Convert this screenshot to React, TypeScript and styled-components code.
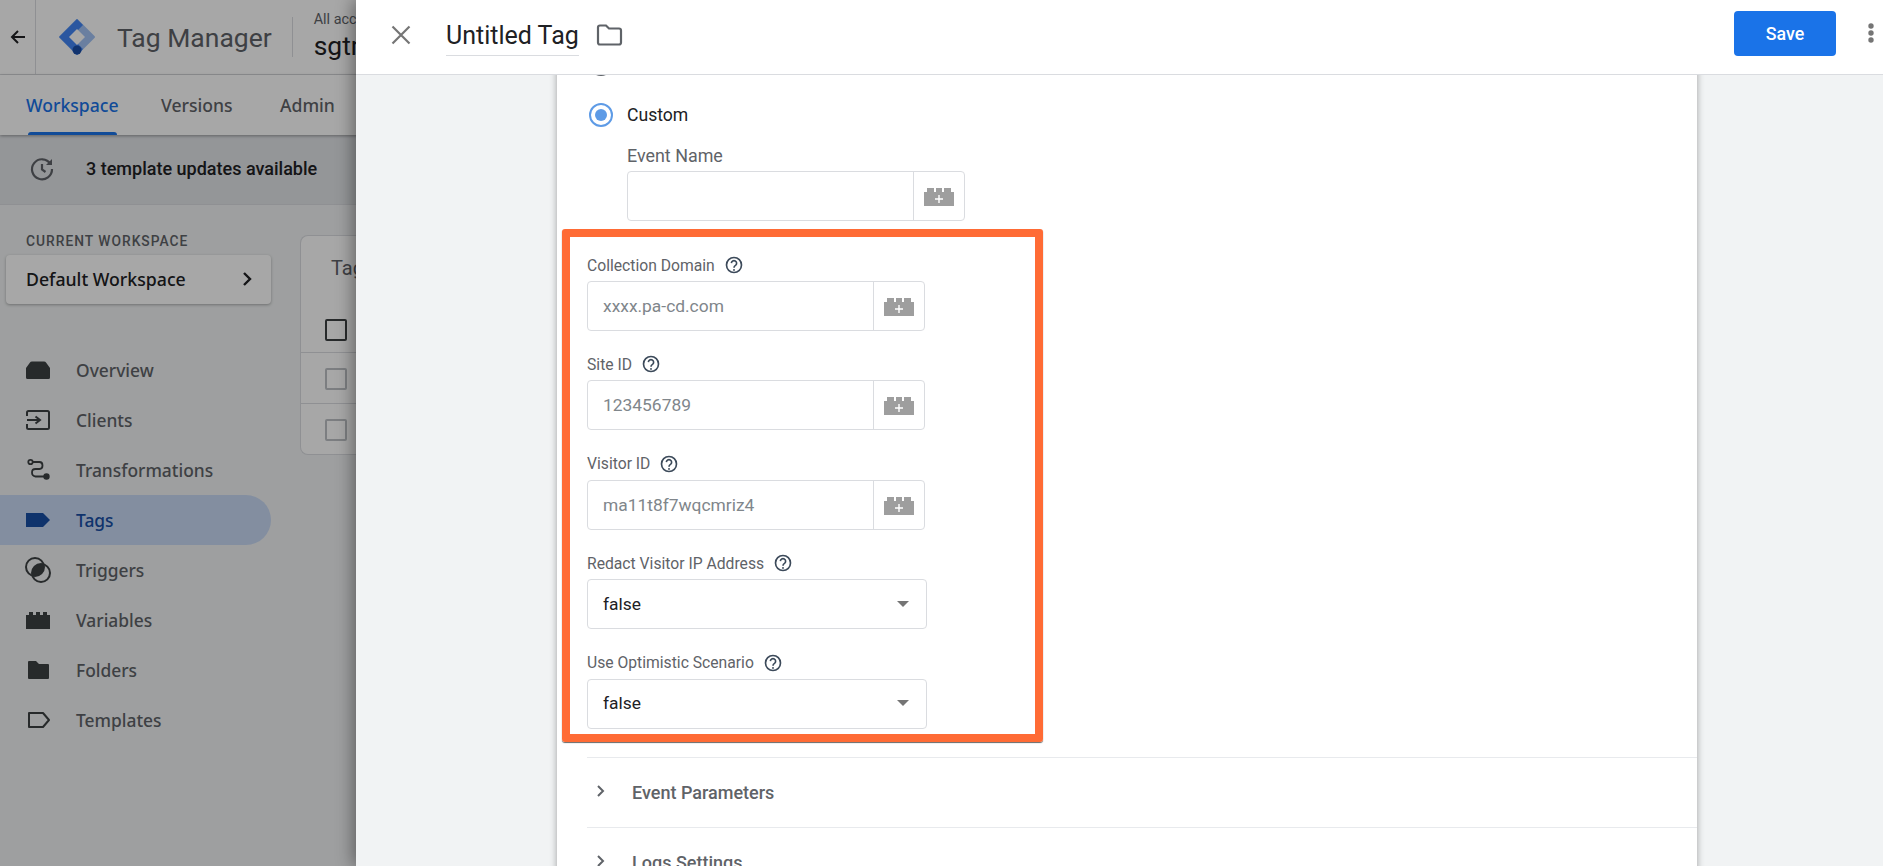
import React from "react";
import styled, { createGlobalStyle } from "styled-components";

const GlobalStyle = createGlobalStyle`
  html, body {
    margin: 0;
    padding: 0;
    height: 100%;
    overflow: hidden;
    font-family: Roboto, "Liberation Sans", sans-serif;
    font-size: 18px;
    color: #202124;
  }
  * { box-sizing: border-box; }
`;

const Page = styled.div`
  position: relative;
  width: 100vw;
  height: 100vh;
  overflow: hidden;
  background: #f1f3f4;
`;

/* ---------- page behind the drawer ---------- */

const TopBar = styled.header`
  display: flex;
  align-items: center;
  height: 75px;
  background: #fff;
  border-bottom: 1px solid #dadce0;
`;

const BackCell = styled.div`
  display: flex;
  align-items: center;
  justify-content: center;
  width: 36px;
  height: 74px;
  border-right: 1px solid #dadce0;
  color: #202124;
`;

const Logo = styled.svg`
  width: 38px;
  height: 38px;
  margin-left: 22px;
  flex: none;
`;

const ProductName = styled.div`
  margin-left: 21px;
  font-size: 26.5px;
  color: #5f6368;
  white-space: nowrap;
`;

const BarDivider = styled.div`
  width: 1px;
  height: 40px;
  margin-left: 20px;
  background: #dadce0;
`;

const AccountBlock = styled.div`
  margin-left: 21px;
  white-space: nowrap;
`;

const AccountPath = styled.div`
  font-size: 14.4px;
  line-height: 18px;
  color: #5f6368;
`;

const ContainerName = styled.div`
  font-size: 26.4px;
  line-height: 34px;
  color: #202124;
`;

const TabBar = styled.nav`
  display: flex;
  height: 60px;
  padding-left: 26px;
  background: #fff;
  box-shadow: 0 1px 3px rgba(0, 0, 0, 0.35);
  position: relative;
`;

const Tab = styled.div<{ $active?: boolean; $width: number }>`
  position: relative;
  width: ${(p) => p.$width}px;
  padding-top: 18px;
  font-family: "Noto Sans", Roboto, sans-serif;
  font-size: 17.6px;
  line-height: 24px;
  font-weight: 500;
  color: ${(p) => (p.$active ? "#1a73e8" : "#5f6368")};
  ${(p) =>
    p.$active &&
    `&::after {
      content: "";
      position: absolute;
      left: 2px;
      width: 89px;
      bottom: 0;
      height: 3px;
      border-radius: 3px 3px 0 0;
      background: #1a73e8;
    }`}
`;

const UpdateBanner = styled.div`
  display: flex;
  align-items: center;
  height: 70px;
  padding: 0 0 2px 29px;
  background: #e3e5e9;
  border-bottom: 1px solid #dadce0;
  font-weight: 500;
  font-size: 18px;
`;

const BannerText = styled.span`
  margin-left: 31px;
`;

const Content = styled.div`
  display: flex;
`;

const Sidebar = styled.aside`
  width: 300px;
  flex: none;
  padding-top: 28px;
`;

const SectionCaption = styled.div`
  padding-left: 26px;
  font-size: 13.8px;
  line-height: 16px;
  font-weight: 500;
  letter-spacing: 1px;
  color: #5f6368;
`;

const WorkspaceButton = styled.div`
  display: flex;
  align-items: center;
  justify-content: space-between;
  width: 265px;
  height: 49px;
  margin: 6px 0 41px 6px;
  padding: 0 18px 2px 20px;
  border-radius: 4px;
  background: #fff;
  box-shadow: 0 1px 3px rgba(0, 0, 0, 0.3);
  font-family: "Noto Sans", Roboto, sans-serif;
  font-size: 17.7px;
  font-weight: 500;
`;

const NavList = styled.div`
  display: flex;
  flex-direction: column;
`;

const NavRow = styled.div<{ $active?: boolean }>`
  display: flex;
  align-items: center;
  width: 271px;
  height: 50px;
  padding: 0 0 1px 26px;
  border-radius: 0 25px 25px 0;
  background: ${(p) => (p.$active ? "#c8d9f4" : "transparent")};
  color: ${(p) => (p.$active ? "#174ea6" : "#5f6368")};
  font-family: "Noto Sans", Roboto, sans-serif;
  font-size: 17.4px;
  font-weight: 500;
`;

const NavIcon = styled.svg`
  width: 26px;
  height: 26px;
  margin-left: -1px;
  margin-right: 25px;
  flex: none;
`;

const TagsCard = styled.section`
  flex: 1;
  height: 220px;
  margin-top: 30px;
  background: #fff;
  border: 1px solid #dadce0;
  border-right: 0;
  border-radius: 8px 0 0 8px;
`;

const TagsTitle = styled.div`
  height: 62px;
  padding: 20px 0 0 30px;
  font-size: 20px;
  line-height: 24px;
  color: #5f6368;
`;

const TagsRow = styled.div<{ $head?: boolean }>`
  display: flex;
  align-items: center;
  height: ${(p) => (p.$head ? "55px" : "51px")};
  padding-top: ${(p) => (p.$head ? "10px" : "1px")};
  padding-left: 24px;
  border-bottom: 1px solid #dadce0;
  &:last-child {
    border-bottom: 0;
  }
`;

const Checkbox = styled.div<{ $dark?: boolean }>`
  width: 22px;
  height: 22px;
  border-radius: 2px;
  border: 2px solid ${(p) => (p.$dark ? "#3c4043" : "#bdc1c6")};
`;

const Scrim = styled.div`
  position: absolute;
  inset: 0;
  background: rgba(0, 0, 0, 0.345);
`;

/* ---------- tag drawer ---------- */

const Drawer = styled.div`
  position: absolute;
  top: 0;
  bottom: 0;
  left: 356px;
  right: 0;
  display: flex;
  flex-direction: column;
  background: #f1f3f4;
  box-shadow: -3px 0 16px rgba(0, 0, 0, 0.4);
`;

const DrawerHeader = styled.header`
  position: relative;
  z-index: 2;
  display: flex;
  align-items: center;
  flex: none;
  height: 75px;
  padding: 0 0 4px 32px;
  background: #fff;
  border-bottom: 1px solid #dadce0;
`;

const TagTitle = styled.div`
  height: 46px;
  width: 133px;
  margin: -4px 0 0 32px;
  padding-top: 10px;
  font-size: 25px;
  line-height: 32px;
  white-space: nowrap;
  color: #202124;
  border-bottom: 1px solid #dadce0;
`;

const FolderIcon = styled.svg`
  width: 28px;
  height: 28px;
  margin-left: 16px;
`;

const SaveButton = styled.div`
  display: flex;
  align-items: center;
  justify-content: center;
  width: 102px;
  height: 45px;
  margin: -3px 0 0 auto;
  border-radius: 4px;
  background: #1a73e8;
  color: #fff;
  font-weight: 500;
  font-size: 17.8px;
`;

const MoreDots = styled.svg`
  width: 8px;
  height: 22px;
  margin: -4px 8px 0 31px;
`;

const DrawerBody = styled.div`
  flex: 1;
  overflow: hidden;
`;

const Card = styled.div`
  width: 1140px;
  margin-left: 201px;
  padding-left: 30px;
  background: #fff;
  box-shadow: 0 0 7px rgba(0, 0, 0, 0.35);
`;

const RadioRow = styled.div<{ $scrolledOff?: boolean }>`
  display: flex;
  align-items: center;
  gap: 14px;
  margin-left: 2px;
  margin-top: ${(p) => (p.$scrolledOff ? "-23px" : "27px")};
  height: 24px;
  font-size: 17.6px;
`;

const Radio = styled.span<{ $checked?: boolean }>`
  display: inline-flex;
  align-items: center;
  justify-content: center;
  width: 24px;
  height: 24px;
  border-radius: 50%;
  border: 2px solid ${(p) => (p.$checked ? "#5e9be6" : "#5f6368")};
  &::after {
    content: "";
    display: ${(p) => (p.$checked ? "block" : "none")};
    width: 12px;
    height: 12px;
    border-radius: 50%;
    background: #5e9be6;
  }
`;

const EventNameBlock = styled.div`
  margin: 19px 0 35px 40px;
`;

const EventLabel = styled.div`
  height: 20px;
  margin-bottom: 5px;
  font-size: 17.9px;
  line-height: 20px;
  color: #5f6368;
`;

const Fields = styled.div`
  position: relative;
  display: flex;
  flex-direction: column;
  gap: 24.4px;
`;

const Highlight = styled.div`
  position: absolute;
  left: -25px;
  top: -27px;
  width: 481px;
  height: 513px;
  border: 8px solid #ff6b35;
  border-radius: 3px;
  box-shadow: 0 1px 1px rgba(0, 0, 0, 0.6);
  pointer-events: none;
`;

const FieldLabel = styled.div`
  display: flex;
  align-items: center;
  height: 18px;
  margin-bottom: 7px;
  font-size: 15.7px;
  color: #5f6368;
`;

const HelpIcon = styled.svg`
  width: 18px;
  height: 18px;
  margin-left: 10px;
  color: #3c4a5a;
`;

const InputGroup = styled.div`
  display: flex;
  width: 338px;
  height: 50px;
  border: 1px solid #dadce0;
  border-radius: 4px;
  background: #fff;
`;

const InputText = styled.div<{ $placeholder?: boolean }>`
  flex: 1;
  padding: 0 15px;
  line-height: 49px;
  font-size: 17.4px;
  color: ${(p) => (p.$placeholder ? "#80868b" : "#202124")};
`;

const VariableButton = styled.div`
  display: flex;
  align-items: center;
  justify-content: center;
  width: 51px;
  flex: none;
  border-left: 1px solid #dadce0;
`;

const BrickIcon = styled.svg`
  width: 30px;
  height: 18px;
  margin-top: 2px;
`;

const SelectBox = styled.div`
  display: flex;
  align-items: center;
  justify-content: space-between;
  width: 340px;
  height: 50px;
  padding: 0 17px 1px 15px;
  border: 1px solid #dadce0;
  border-radius: 4px;
  font-size: 17.4px;
  color: #202124;
`;

const Caret = styled.span`
  width: 0;
  height: 0;
  border-left: 6px solid transparent;
  border-right: 6px solid transparent;
  border-top: 6px solid #757575;
`;

const Sections = styled.div`
  margin-top: 28px;
`;

const SectionRow = styled.div`
  display: flex;
  align-items: center;
  height: 70px;
  padding-left: 9px;
  border-top: 1px solid #e8eaed;
  font-size: 18px;
  font-weight: 500;
  color: #5f6368;
`;

const SectionChevron = styled.svg`
  width: 10px;
  height: 14px;
  margin: -3px 26px 0 0;
`;

const navItems: { label: string; icon: React.ReactNode; active?: boolean }[] = [
  {
    label: "Overview",
    icon: <path d="M1 11 5 5.500Q5.500 4.500 7 4.500H19Q20.500 4.500 21 5.500L25 11V20.500Q25 22 23.500 22H2.500Q1 22 1 20.500Z" fill="#3c4043" />,
  },
  {
    label: "Clients",
    icon: (
      <path
        d="M2 9V5.500Q2 4 3.500 4H22.500Q24 4 24 5.500V20.500Q24 22 22.500 22H3.500Q2 22 2 20.500V17M2 13H14M10.500 9.500 15 13 10.500 16.500"
        fill="none"
        stroke="#3c4043"
        strokeWidth="2"
      />
    ),
  },
  {
    label: "Transformations",
    icon: (
      <g fill="none" stroke="#3c4043" strokeWidth="1.800">
        <circle cx="5.500" cy="5" r="2.200" />
        <path d="M7.700 5H14.500Q17.500 5 17.500 8.500T14.500 12H10.500Q7 12 7 15.500T10.500 19.500H20" />
        <circle cx="21.500" cy="19.500" r="2.300" fill="#3c4043" />
      </g>
    ),
  },
  {
    label: "Tags",
    active: true,
    icon: <path d="M1 6H18L25 13 18 20H1Z" fill="#174ea6" />,
  },
  {
    label: "Triggers",
    icon: (
      <g fill="none" stroke="#3c4043" strokeWidth="2">
        <circle cx="10" cy="10" r="9" />
        <circle cx="16" cy="16" r="9" />
        <path d="M18.600 7.400A9 9 0 0 1 7.400 18.600 9 9 0 0 1 18.600 7.400Z" fill="#3c4043" stroke="none" />
      </g>
    ),
  },
  {
    label: "Variables",
    icon: <path d="M1 22V8H4V5H8V8H11V5H15V8H18V5H22V8H25V22Z" fill="#3c4043" />,
  },
  {
    label: "Folders",
    icon: <path d="M3 5Q3 4 4 4H11L14 7H23Q24 7 24 8V21Q24 22 23 22H4Q3 22 3 21Z" fill="#3c4043" />,
  },
  {
    label: "Templates",
    icon: <path d="M4 6H18L24 13 18 20H4Z" fill="none" stroke="#3c4043" strokeWidth="2" strokeLinejoin="round" />,
  },
];

const tabs = [
  { label: "Workspace", width: 135, active: true },
  { label: "Versions", width: 119, active: false },
  { label: "Admin", width: 70, active: false },
];

const textFields = [
  { label: "Collection Domain", value: "xxxx.pa-cd.com" },
  { label: "Site ID", value: "123456789" },
  { label: "Visitor ID", value: "ma11t8f7wqcmriz4" },
];

const selectFields = ["Redact Visitor IP Address", "Use Optimistic Scenario"];

const Help = () => (
  <HelpIcon viewBox="0 0 24 24" fill="none" stroke="currentColor" strokeWidth="2.200">
    <circle cx="12" cy="12" r="10" />
    <path d="M8.500 9.500A3.500 3.500 0 1 1 14 12.500Q12 13.500 12 15.500" />
    <circle cx="12" cy="18.500" r="1.300" fill="currentColor" stroke="none" />
  </HelpIcon>
);

const Brick = () => (
  <BrickIcon viewBox="0 0 30 18">
    <path d="M0 18V4H3V0H10V4H12V0H18V4H20V0H27V4H30V18Z" fill="#9e9e9e" />
    <path d="M15 7V15M11 11H19" stroke="#fff" strokeWidth="1.400" />
  </BrickIcon>
);

const App = () => {
  return (
    <Page>
      <GlobalStyle />

      <TopBar>
        <BackCell>
          <svg width="16" height="16" viewBox="0 0 16 16" fill="none" stroke="currentColor" strokeWidth="2">
            <path d="M15 8H2M8 2 2 8 8 14" />
          </svg>
        </BackCell>
        <Logo viewBox="0 0 38 38">
          <path d="M19 2 36 19 19 36 2 19Z" fill="#a3c3f5" stroke="#a3c3f5" strokeWidth="2" strokeLinejoin="round" />
          <path d="M19 1 1.500 18.500Q1 19 1.500 19.500L19 37 25 31 13 19 25 7Z" fill="#4285f4" />
          <path d="M19 11 27 19 19 27 11 19Z" fill="#fff" />
          <circle cx="19" cy="32" r="4.500" fill="#1a4fa8" />
        </Logo>
        <ProductName>Tag Manager</ProductName>
        <BarDivider />
        <AccountBlock>
          <AccountPath>All accounts</AccountPath>
          <ContainerName>sgtm</ContainerName>
        </AccountBlock>
      </TopBar>

      <TabBar>
        {tabs.map((tab) => (
          <Tab key={tab.label} $active={tab.active} $width={tab.width}>
            {tab.label}
          </Tab>
        ))}
      </TabBar>

      <UpdateBanner>
        <svg width="26" height="26" viewBox="0 0 26 26" fill="none" stroke="#5f6368" strokeWidth="2.200">
          <path d="M21.500 8A10 10 0 1 0 23 13" />
          <path d="M13 8V13.500L16.500 16" />
          <path d="M23 3V9H17Z" fill="#5f6368" stroke="none" />
        </svg>
        <BannerText>3 template updates available</BannerText>
      </UpdateBanner>

      <Content>
        <Sidebar>
          <SectionCaption>CURRENT WORKSPACE</SectionCaption>
          <WorkspaceButton>
            Default Workspace
            <svg width="11" height="16" viewBox="0 0 11 16" fill="none" stroke="#202124" strokeWidth="2.400">
              <path d="M2 2 8 8 2 14" />
            </svg>
          </WorkspaceButton>
          <NavList>
            {navItems.map((item) => (
              <NavRow key={item.label} $active={item.active}>
                <NavIcon viewBox="0 0 26 26">{item.icon}</NavIcon>
                {item.label}
              </NavRow>
            ))}
          </NavList>
        </Sidebar>
        <TagsCard>
          <TagsTitle>Tags</TagsTitle>
          <TagsRow $head>
            <Checkbox $dark />
          </TagsRow>
          <TagsRow>
            <Checkbox />
          </TagsRow>
          <TagsRow>
            <Checkbox />
          </TagsRow>
        </TagsCard>
      </Content>

      <Scrim />

      <Drawer>
        <DrawerHeader>
          <svg width="26" height="26" viewBox="0 0 26 26" fill="none" stroke="#757575" strokeWidth="2.200">
            <path d="M4.500 4.500 21.500 21.500M21.500 4.500 4.500 21.500" />
          </svg>
          <TagTitle>Untitled Tag</TagTitle>
          <FolderIcon viewBox="0 0 28 28" fill="none" stroke="#5f6368" strokeWidth="2.200">
            <path d="M3 6.500Q3 4.500 5 4.500H11L14 7.500H24Q26 7.500 26 9.500V21.500Q26 23.500 24 23.500H5Q3 23.500 3 21.500Z" />
          </FolderIcon>
          <SaveButton>Save</SaveButton>
          <MoreDots viewBox="0 0 8 22" fill="#757575">
            <circle cx="4" cy="4" r="2.700" />
            <circle cx="4" cy="11" r="2.700" />
            <circle cx="4" cy="18" r="2.700" />
          </MoreDots>
        </DrawerHeader>

        <DrawerBody>
          <Card>
            <RadioRow $scrolledOff>
              <Radio />
            </RadioRow>
            <RadioRow>
              <Radio $checked />
              Custom
            </RadioRow>
            <EventNameBlock>
              <EventLabel>Event Name</EventLabel>
              <InputGroup>
                <InputText />
                <VariableButton>
                  <Brick />
                </VariableButton>
              </InputGroup>
            </EventNameBlock>

            <Fields>
              {textFields.map((field) => (
                <div key={field.label}>
                  <FieldLabel>
                    {field.label}
                    <Help />
                  </FieldLabel>
                  <InputGroup>
                    <InputText $placeholder>{field.value}</InputText>
                    <VariableButton>
                      <Brick />
                    </VariableButton>
                  </InputGroup>
                </div>
              ))}
              {selectFields.map((label) => (
                <div key={label}>
                  <FieldLabel>
                    {label}
                    <Help />
                  </FieldLabel>
                  <SelectBox>
                    false
                    <Caret />
                  </SelectBox>
                </div>
              ))}
              <Highlight />
            </Fields>

            <Sections>
              {["Event Parameters", "Logs Settings"].map((title) => (
                <SectionRow key={title}>
                  <SectionChevron viewBox="0 0 10 14" fill="none" stroke="#5f6368" strokeWidth="2">
                    <path d="M2 2 7 7 2 12" />
                  </SectionChevron>
                  {title}
                </SectionRow>
              ))}
            </Sections>
          </Card>
        </DrawerBody>
      </Drawer>
    </Page>
  );
};

export default App;
